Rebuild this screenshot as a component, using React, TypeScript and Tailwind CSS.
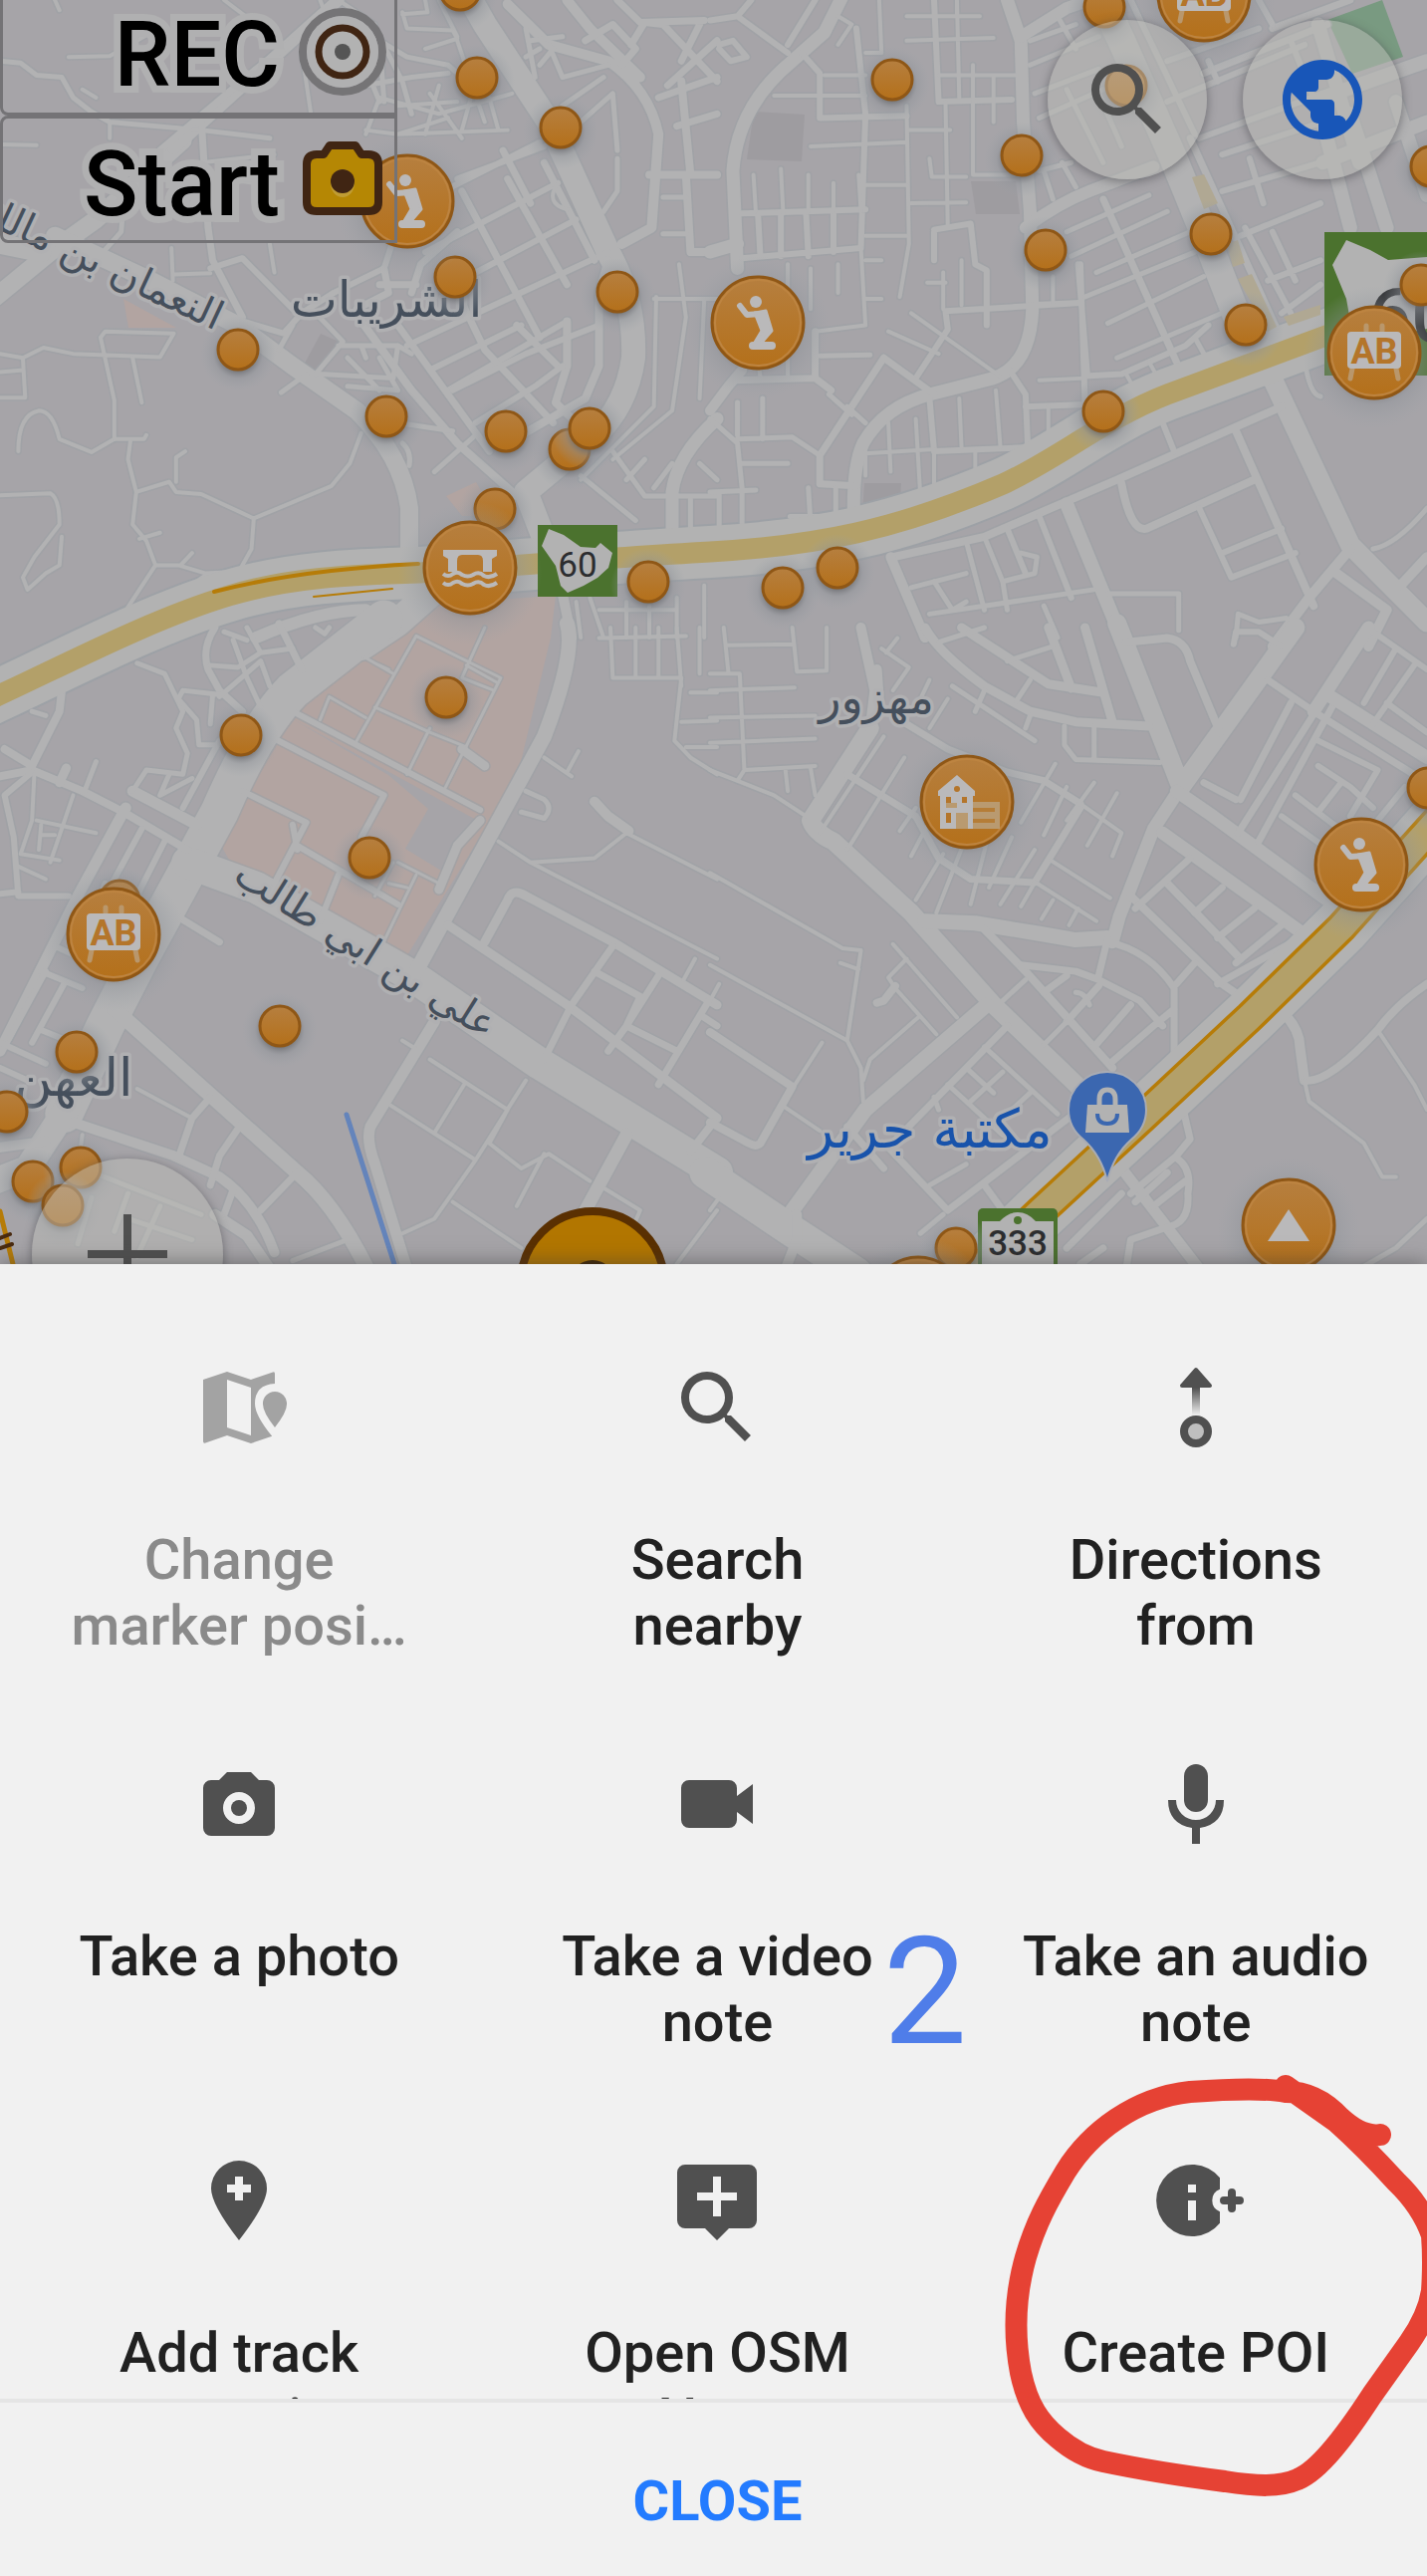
import { useId, type ReactNode } from "react";

type Road = [number, string];

// Street network, stored per map tile. Each tile is 1568 units square.
const tiles: { transform: string; roads: Road[] }[] = [
  {
    transform: "scale(0.4592 0.4082)",
    roads: [
      [18, "M-20 740 L110 620 L210 540 L400 345"],
      [12, "M380 365 L660 80 L740 0"],
      [20, "M0 600 L90 620"],
      [24, "M1030 0 L1060 60 L1200 300 L1330 620 Q1390 740 1385 880 Q1370 1000 1300 1070 L1150 1210 L1195 1340"],
      [18, "M120 580 L330 690 L520 800 L640 900 L780 1010 Q880 1120 895 1250 L895 1370"],
      [5, "M0 150 L45 155 L80 185 L135 190 L160 240 L200 275 L240 300 L440 320 L590 340"],
      [4, "M240 300 L240 340 M0 355 L80 357 M120 0 L130 25 M150 140 L240 138 L330 80 M490 0 L560 60 M180 220 L210 240"],
      [7, "M640 100 L560 170 L350 370 M440 290 L455 560 L465 640 L530 780"],
      [4, "M440 400 L600 380 M375 610 L378 690 M380 675 L460 672 M590 600 L600 670 M660 130 L680 280"],
      [6, "M460 660 L530 635 L640 760 M530 790 L620 820 L660 770 L730 720 L840 660 L860 590"],
      [5, "M270 500 L265 570 L210 640"],
      [4, "M0 870 L50 880 L95 855 L160 870 L350 878 L380 820 L230 815 L220 830 L250 985 L250 1080 L200 1112 L130 1080 Q115 1010 85 1010 Q40 1020 40 1110"],
      [4, "M50 880 L55 978 L0 978 M0 915 L50 910 M290 880 L310 990 M250 1080 L315 1080 L320 1070"],
      [4, "M285 1085 L280 1130 L298 1210 L290 1290 L320 1330 L340 1390 L270 1510"],
      [4, "M298 1210 L370 1185 L385 1210 L440 1215 L555 1275 L725 1195 L765 1140 L790 1065 M385 1185 L385 1125 L405 1110"],
      [4, "M555 1275 L550 1350 L525 1400 M340 1390 L390 1390 L450 1410 L530 1405 M420 1360 L395 1390 M305 1325 L350 1310 M430 1430 L455 1410"],
      [4, "M0 1218 L110 1213 Q130 1225 130 1290 L75 1370 L50 1420 L60 1450 L100 1410 L130 1390 L135 1320"],
      [8, "M790 790 L900 960 L1000 1090 L1130 1220"],
      [5, "M610 860 L640 800 M690 920 L750 840 L690 770 M740 850 L870 850 L860 930 L700 920 M760 880 L830 960 M870 850 L900 870 M615 965 L670 920 M790 850 L800 880 M830 880 L870 960 M760 950 L870 960"],
      [7, "M840 660 L850 720 L780 760 M900 720 L920 650 L1000 570 M830 700 L910 700"],
      [6, "M930 620 L1220 450 M970 470 L1180 350 M990 700 L1260 540 M890 850 L1330 620 M940 910 L1140 800 M980 960 L1240 790 M1000 440 L1190 360"],
      [7, "M1010 470 L1180 830 M1110 440 L1240 700 M1190 400 L1300 640 M1100 370 L1160 500"],
      [7, "M870 800 L1070 1110 M1000 720 L1060 860 L1210 1040 M1130 800 L1220 900"],
      [8, "M1330 640 L1310 720 L1310 900 L1280 980 L1140 1070 M1240 790 L1240 900 L1215 990 L1260 1040"],
      [6, "M990 960 L1150 870 L1310 800 M1040 1040 L1170 950 L1230 900"],
      [5, "M950 1160 L1040 1070 M870 1040 L990 1060 M880 1090 Q900 1110 895 1145"],
      [5, "M730 40 L800 80 L890 140 L980 160 L1000 180 M820 70 L880 200 L900 280 M790 140 L830 250 M800 210 L900 190 L980 180 M830 100 L840 250"],
      [4, "M880 30 L890 70 L990 75 L1000 95 L930 120 M960 0 L1000 90 M930 0 L935 30 L880 35 M700 0 L720 60 M740 0 L820 60"],
      [4, "M800 330 L830 240 L960 280 L1120 230 M870 330 L980 290 M1000 100 L1060 300 M800 320 L870 330 L1110 320 M870 260 L1000 250 M940 230 L1010 340 M1030 240 L1010 320 M1070 240 L1090 320 M960 210 L930 330"],
      [4, "M1220 450 Q1190 500 1240 515"],
      [10, "M1110 10 L1200 110 L1330 150 Q1420 220 1440 330 L1425 560 L1360 600 M1240 0 L1290 70 L1400 190"],
      [7, "M1280 100 L1340 60 L1390 120 L1360 160 M1380 110 L1410 55 L1450 60 L1568 200 M1460 210 L1568 100 M1480 310 L1568 280 M1440 240 L1568 190 M1530 60 L1490 150 M1350 0 L1400 55 L1540 50"],
      [8, "M1420 430 L1568 430 M1500 430 L1510 620 L1568 620 M1490 200 L1510 430"],
      [5, "M1450 485 L1500 485 M1450 575 L1500 575 M1200 110 L1230 190 L1330 160 M1150 70 L1170 190 M1230 260 L1320 190 M1240 330 L1340 230 L1350 370 M1350 390 L1350 470 L1320 520 M1180 120 L1150 140 M1160 100 L1230 90 M1210 120 L1180 160"],
      [4, "M1435 730 L1430 1000 L1270 1180 M1485 650 L1500 780 L1470 1010 L1340 1130 M1540 740 L1530 980 M1430 735 L1568 735"],
      [13, "M1568 1030 Q1480 1120 1470 1210 L1470 1330"],
      [5, "M1340 1110 L1410 1220 L1568 1220 M1270 1170 L1390 1280 M1410 1130 L1370 1180 M1530 1140 L1568 1180 M1470 1140 L1430 1200 M1510 1220 L1510 1310"],
      [10, "M1230 1460 L1250 1568"],
      [4, "M1260 1480 L1270 1568 M1290 1470 L1320 1568 M1370 1480 L1370 1568 M1420 1490 V1568 M1480 1470 V1568 M1310 1500 H1480 M1540 1440 V1568"],
      [28, "M960 1440 L870 1530 L790 1590"],
      [12, "M800 1500 Q700 1500 560 1568"],
    ],
  },
  {
    transform: "translate(713 0) scale(0.4592 0.4082)",
    roads: [
      [13, "M650 0 L680 100 L685 300 L700 520 L705 760 Q700 900 620 930 L480 970 Q380 1000 335 1090 Q310 1150 315 1290"],
      [12, "M680 90 L780 20 L830 0 M690 560 Q760 500 830 470 L970 410"],
      [13, "M290 -10 L250 80 L180 150 Q60 260 50 420 L60 660 M60 600 L0 620"],
      [28, "M850 -20 L900 100 L1010 380 L1090 600 L1160 800"],
      [20, "M1225 920 L1400 1340 L1568 1530"],
      [8, "M400 1370 L600 1320 L890 1180 L1250 1000 M780 1240 L880 1500 L910 1590 M900 1190 Q920 1310 955 1300 L1190 1180 M1150 1060 L1300 1440 L1320 1490"],
      [14, "M780 1240 L900 1568"],
      [6, "M1070 1250 L1140 1420 L1280 1360 M1120 1360 L1250 1300 M990 1040 L1015 1110 M720 1270 L790 1470 M650 1300 L690 1410"],
      [10, "M395 1370 L470 1568"],
      [5, "M440 1445 L560 1410 M560 1330 L600 1500 M480 1510 L840 1450 M490 1430 L530 1500 L560 1480 M870 1460 H1025 V1550 M680 1360 L715 1370 L710 1410 L640 1430 M600 1320 L640 1430 L650 1500 M730 1490 L760 1568"],
      [10, "M1400 1350 L1310 1470 L1230 1590 M1370 1410 L1480 1500 L1440 1590 M1510 1440 L1568 1370"],
      [5, "M1568 1250 Q1500 1340 1450 1350 M1300 880 Q1310 970 1335 975 M1150 1568 L1155 1510 L1200 1530 L1260 1520"],
      [6, "M70 525 L340 515 M105 530 L110 630 M155 525 V630 M210 525 L215 630 M270 520 V620 M70 635 L330 610 M320 70 L340 280 L330 610"],
      [6, "M200 130 L240 180 L240 290 L430 285 M490 0 L500 250 L660 245"],
      [4, "M250 185 H340 M140 235 H340 M280 110 L310 60 L280 40 M370 0 L375 130 L340 130 M430 260 L435 600 L415 730 M220 360 L430 350 M430 40 H590 M430 100 L620 93 M500 185 H670 M540 0 V40 M575 160 V430 L680 430 M620 190 V300 M480 390 L485 435 L560 435 M515 250 L520 560 M435 320 L525 320 M440 500 L560 498 M540 0 L545 240 M330 610 L340 800 L230 815 M340 640 H375 M340 735 H375"],
      [6, "M490 565 L570 550 L580 650 L605 665 L605 800 M490 570 V640 M515 765 L810 745 L700 750 M515 765 L520 810 L450 930"],
      [4, "M340 580 H430 M95 430 L100 520 M155 415 L160 525 M215 430 V520 M270 450 V520 M325 430 L330 520 M330 455 H430 M475 695 H515 M510 670 V760 M550 640 V750 M390 815 L500 870 M440 770 L640 930 M750 680 V745 M170 650 V930 M220 660 V760 M280 650 V720 M100 830 L110 930"],
      [7, "M380 880 L490 970 M380 880 L240 1120 L240 1190 L320 1195 M50 935 L230 930 L265 960 M230 930 V815"],
      [10, "M70 910 L40 950 L0 1010"],
      [5, "M300 1000 L340 1040 M0 1030 L60 1090 L70 1200 M240 875 L350 873 M60 1080 L180 1075 L240 1120 M0 1210 L100 1205 M20 1210 V1300 M70 1200 V1300 M60 990 V1070 M215 1200 L220 1290 M275 1200 V1290 M175 1270 H255 M115 980 V1080 M70 1140 H170 M260 970 L310 1020"],
      [6, "M655 910 L690 970 L695 1100 L490 1110 M480 980 L490 1110 M805 650 L825 920 M820 925 L900 920 L1040 850 L1090 800 M810 650 L820 990 M690 1000 L810 995"],
      [4, "M720 935 L820 930 M545 980 L550 1100 M625 960 L635 1100 M740 1000 V1060 M340 1115 L490 1105 M390 1040 L395 1160 M450 1030 L460 1220 M580 1110 V1160 M490 1110 V1190 M340 1110 V1170 M910 920 L930 960 M960 890 L980 930"],
      [6, "M0 50 L60 40 L170 130 M20 110 L50 100 L80 140 L45 150 L20 120 M170 110 L230 0 M60 40 L90 0"],
      [7, "M860 490 L1020 890 M1050 340 L1240 810 M1080 180 L1350 60 M1230 70 L1400 0"],
      [5, "M780 570 L960 480 M790 630 L1000 520 M845 670 L1050 570 M870 795 L1080 680 M890 880 L1120 770 M820 730 L1060 620 M700 160 L850 90 M710 230 L850 170 M720 290 L860 220 M700 100 L800 60 M760 40 L800 120 M780 220 L860 400 M850 230 L900 360 M730 420 L750 490 M770 400 L800 460 M720 420 L790 400 M1060 830 L1080 870"],
      [6, "M1000 250 L1300 110 M1070 340 L1340 230 M1120 380 L1340 300 M1120 470 L1335 400 M1160 580 L1335 500 M1170 560 L1270 770 M1220 690 L1335 640 M1250 770 L1335 700 M1090 150 L1110 200 M1230 60 L1200 0 M1180 390 L1210 500 M1230 570 L1280 690 M1000 150 L1200 70 M920 0 L1060 330 M1270 100 L1330 270"],
      [14, "M1340 300 L1400 560 M1400 280 L1480 560 M1500 250 L1568 480 M1340 400 L1568 300 M1340 240 L1568 150 M1330 60 L1420 400"],
    ],
  },
  {
    transform: "translate(0 630) scale(0.4592 0.4209)",
    roads: [
      [38, "M840 -20 L640 150 Q560 240 480 440 L400 600 L310 780 L230 950 L140 1160"],
      [26, "M150 1140 L60 1290 L-10 1320"],
      [32, "M410 560 L560 620 L900 830 L1180 1040 L1568 1300"],
      [15, "M1240 -10 Q1260 60 1190 260 L1080 480 L905 830"],
      [11, "M950 940 L810 1190 Q800 1220 820 1280 L890 1530"],
      [15, "M250 910 L650 1300 Q740 1380 820 1568"],
      [3, "M780 60 L860 110 M700 220 L720 165 L800 215 M780 270 L910 20 L1095 120 L970 390 M1060 0 L1010 120 L1080 150 M820 190 L940 250 L1020 285 M940 240 L890 350 M870 560 L960 610 M910 590 L830 770 M860 560 L820 640 M850 610 L890 620 M820 85 L850 100 M1020 90 L1085 130"],
      [6, "M640 200 L1050 435 M600 265 L840 400 L790 500 M530 390 L670 465 L600 610 M650 520 L870 660 M740 590 L700 700 M640 470 L650 530"],
      [9, "M1010 290 L1060 330 M1050 460 L1000 520 L960 625"],
      [8, "M10 290 L70 330 L130 200 L135 150 M0 355 L70 340 L180 390 L270 440 L410 530"],
      [6, "M70 345 L10 400 L30 500 L40 640 L150 640 M40 630 L0 635"],
      [4, "M75 350 L70 460 L45 540 M80 460 L210 490 M45 540 L130 555 M160 400 L110 560 M90 470 L85 530 M90 495 H120 M40 570 L100 600"],
      [11, "M275 430 L170 640 L0 1010 M290 390 L430 470"],
      [6, "M310 480 L240 620 M360 510 L290 660 M400 430 L480 270 M230 610 L220 640"],
      [5, "M300 85 L360 110 L400 200 L385 240 L410 300 L400 350 L320 340 L290 390 M370 350 L350 400 L420 360"],
      [7, "M470 0 Q440 50 455 100 L480 150 L530 200 M610 -10 L660 100"],
      [5, "M480 160 L400 150 L390 170 L430 220 L435 280 L470 280 M460 90 L520 95 L570 60 L640 50 M510 30 L540 120 L570 190 M480 165 L570 80 L590 140 M490 10 L540 30 M465 160 L460 230 M540 0 L570 60"],
      [5, "M100 210 L70 200 M210 320 L185 390 M690 0 L710 15 L720 0"],
      [9, "M145 335 L130 370"],
      [6, "M90 820 L180 860 M120 760 L200 800 M0 990 L100 1040 M20 980 L100 820 M0 1050 L60 1080 M70 990 L140 850 M90 960 L180 1000"],
      [10, "M160 1180 L380 1260 L480 1310 Q560 1370 600 1490 M0 1240 L100 1225"],
      [4, "M300 1100 L420 1170 M1265 295 L1240 345 M1190 310 L1250 355 M180 1210 L175 1250"],
      [7, "M460 1120 L420 1170 L390 1265 M530 1180 L480 1260 L460 1330 M650 1300 L570 1390 M390 690 L480 750 M510 1340 L490 1400"],
      [5, "M640 1510 L760 1460 M180 1290 L440 1400 M280 1350 L250 1440 M350 1380 L300 1500 M200 1360 L170 1470 M280 1410 L420 1460"],
      [11, "M470 1400 L540 1450 L590 1530"],
      [9, "M980 710 L1240 900 L1568 1170 M1060 750 L1110 650 Q1120 620 1150 640 L1340 750 L1568 900"],
      [7, "M1340 760 L1250 900 L1190 1030 M1300 820 L1400 880 L1370 950 L1480 1010 M1440 830 L1370 950 L1330 1010 M1550 890 L1440 1090 M1540 930 L1568 950"],
      [4, "M1370 490 L1568 600 M1090 510 L1160 560 L1300 550 L1370 490 M1160 560 L1568 790 M1520 790 L1495 840"],
      [10, "M1300 415 L1330 450 L1375 485"],
      [5, "M1150 390 L1190 410 Q1210 430 1190 455 L1140 440"],
      [4, "M1310 25 L1500 20 M1335 0 L1340 120 L1490 120 L1475 270 L1510 310 L1568 350 M1440 0 V120 M1390 0 V120 M1480 0 L1490 140 M1510 155 H1568 M1490 225 L1568 222 M1500 285 H1568 M1530 0 V110"],
      [4, "M940 1030 L1110 1150 L1070 1230 M1015 1090 L950 1205 M855 1140 L1040 1270 L950 1410 L880 1445 M1150 1080 L1040 1270 M1070 1230 L1140 1290 L1200 1255 L1290 1320 M990 1370 L1140 1480 M1190 1255 L1130 1380 M1310 1330 L1400 1390 L1380 1440 M880 985 L910 1005 M1568 1390 L1480 1518"],
      [13, "M1370 1210 L1250 1450"],
      [8, "M1560 1180 L1510 1250"],
    ],
  },
  {
    transform: "translate(713 630) scale(0.4592 0.4209)",
    roads: [
      [18, "M350 240 L220 460 Q230 490 270 510 L440 680 L620 900 L830 1120"],
      [11, "M900 1290 L1070 1530"],
      [15, "M470 700 L580 705 L720 730 L800 745 L870 740"],
      [13, "M880 750 L895 690 L970 480 L1030 380"],
      [19, "M1030 380 L890 -10 M1030 380 L1280 0"],
      [15, "M605 900 L340 1150 L180 1390"],
      [32, "M-10 1300 L180 1440 L320 1540"],
      [13, "M1020 390 L1100 450 L1350 650 M990 490 L1310 740"],
      [4, "M0 340 L70 370 L140 400 L210 450 M0 585 L290 765 L330 770 L300 985 L330 1050 L335 1130 M0 805 L300 985 M285 800 L325 815 M455 930 L350 1030 L335 1080 M400 755 L540 930 M430 790 L390 835 L405 860 L495 970 M245 990 L180 1100 M165 1145 L240 1200 M20 850 L0 890"],
      [8, "M0 965 L180 1095 L110 1230 Q100 1240 85 1230 L0 1180 M405 855 L380 890 L365 895"],
      [4, "M75 340 L65 110 L0 110 M60 365 L75 340 L230 330 M165 340 L170 390 M220 335 L230 400 M0 215 L230 210 M0 275 L230 265 M0 150 L185 143 M30 0 L40 105 M35 42 L180 40 M180 0 L190 105 L255 103 V0"],
      [10, "M330 0 L360 150 L350 240 M365 100 L370 180"],
      [4, "M375 50 L435 95 L400 150 M410 25 L385 60 M520 170 L480 240 M480 125 L460 170"],
      [7, "M400 210 L520 290 L650 345 L730 365 L810 420 M300 350 L450 450 L500 550 L570 600 L710 608 L810 430"],
      [4, "M810 420 L900 490 L880 545 M380 260 L240 490 M425 310 L300 530 M450 430 L415 485 M500 420 L440 545 M510 540 L450 650 M560 500 L495 680 M610 490 L570 660 M660 500 L610 620 M710 530 L635 660 M755 325 L680 465 M780 380 L730 495 M840 370 L780 460 M890 395 L825 520 M745 555 L875 645 M710 608 L680 665 M715 610 L845 700 M750 650 L725 695 M805 670 L785 710"],
      [9, "M470 0 Q500 60 600 140 L700 200 L800 225 L960 235 M550 0 L740 135 L860 155 M740 0 L790 145 M820 0 L880 225"],
      [5, "M500 35 L600 0 M650 80 L750 45 M700 125 L670 175 M530 140 L710 270 M600 150 L580 200 M700 210 L690 240 M775 235 L775 280 L800 315 L985 322 M840 235 V315"],
      [8, "M910 35 L1000 25 Q1040 30 1050 80 L1115 250"],
      [7, "M1220 125 L1320 200 L1480 310 L1568 370 M1155 490 L1330 190 L1440 0 M1080 370 L1150 410 M1160 410 L1270 180 M1370 170 L1200 510"],
      [13, "M1320 200 L1440 0 M1350 160 L1568 310"],
      [6, "M1450 10 L1568 100 M1500 50 L1430 180 M1540 90 L1450 230 M1480 180 L1568 250 M1280 400 L1400 500 M1330 330 L1400 380 L1450 430 M1250 450 L1340 520 M1380 370 L1330 440 M1460 340 L1400 450 M1520 380 L1460 460 M1330 270 L1460 340"],
      [6, "M1145 40 L1150 10 L1200 10 L1250 45"],
      [8, "M920 640 L1120 850 L1160 880 M1000 610 L1160 790 M600 720 L690 820 L880 1050"],
      [7, "M1050 550 L930 670 M1120 620 L1060 680 M1190 670 L1110 740 M1250 710 L1150 800 M1290 740 L1110 850 M1060 800 L1020 850 M680 805 L800 820 L850 840 L940 890 L990 950 M870 750 Q960 770 1015 860 L1015 1020 M870 740 L850 830 M780 830 L730 870 M850 855 L780 940 M920 900 L840 1000 M970 950 L880 1035 M1015 910 L970 950"],
      [5, "M800 870 Q820 870 830 900 M640 890 L690 840 M780 940 L730 995 M600 1000 L760 1160 M560 1050 L620 1110 M640 1060 L570 1130 M520 1090 L640 1210 M700 1110 L650 1160 M480 1330 L560 1280 M510 1400 L460 1445 M490 1120 L500 1150"],
      [7, "M650 950 L390 1240 L520 1390 L820 1140 M300 1190 L380 1290 M600 1330 L640 1390"],
      [10, "M190 1400 L190 1460 L165 1530"],
      [10, "M1255 920 Q1290 960 1290 1000 L1300 1080"],
      [8, "M1300 1080 Q1350 1090 1460 960 Q1500 900 1568 850"],
      [4, "M1300 1080 L1310 1130 L1430 1230 L1470 1310 L1500 1310 M1460 960 L1540 1090 L1568 1150 M0 1390 L20 1360"],
      [7, "M1035 1150 L1050 1220 L1020 1260 L920 1350 M1020 1265 Q1055 1290 1045 1350 Q1050 1420 1000 1430 L920 1460 L910 1530 M1000 1300 L930 1370 M900 1350 L780 1480 M860 1480 L810 1518 M1040 1320 L970 1380"],
      [5, "M1420 1530 L1500 1480 L1568 1410"],
    ],
  },
];

const smallPins: [number, number][] = [
  [462, -10], [479, 78], [563, 128], [457, 278], [620, 293], [239, 351], [388, 418], [508, 433],
  [572, 451], [592, 430], [497, 511], [651, 584], [1109, 7], [896, 80], [1026, 156], [1050, 251],
  [1216, 235], [1251, 326], [1108, 413], [841, 570], [786, 590], [1437, 167], [1427, 286], [1131, 86],
  [448, 700], [242, 738], [371, 861], [120, 904], [281, 1030], [77, 1056], [7, 1116], [33, 1186],
  [81, 1172], [63, 1210], [960, 1253], [1434, 791],
];

type PinKind = "prayer" | "school" | "bridge" | "house" | "peak";
const bigPins: [number, number, PinKind][] = [
  [409, 202, "prayer"], [761, 324, "prayer"], [1367, 868, "prayer"],
  [1380, 354, "school"], [114, 938, "school"], [1209, -5, "school"],
  [472, 570, "bridge"], [971, 805, "house"], [1294, 1230, "peak"], [922, 1308, "peak"],
];

function PinGlyph({ kind }: { kind: PinKind }) {
  if (kind === "prayer")
    return (
      <g fill="#bab9ba" stroke="#bab9ba" strokeLinecap="round" strokeLinejoin="round">
        <circle cx="-2" cy="-21" r="6" stroke="none" />
        <path d="M-18 -17 L-11 -8 L4 -9" fill="none" strokeWidth="6" />
        <path d="M-3 -10 L8 -12 L14 8 L2 22 L-5 23 L4 8 Z" strokeWidth="3" />
        <path d="M-5 23 H14" fill="none" strokeWidth="8" />
      </g>
    );
  if (kind === "school")
    return (
      <g>
        <path d="M-8 -22 V-27 M8 -22 V-27 M-22 16 L-24 26 M22 16 L24 26" stroke="#b9976c" strokeWidth="5" strokeLinecap="round" />
        <rect x="-27" y="-21" width="54" height="37" rx="4" fill="#bab9ba" />
        <text y="11" textAnchor="middle" className="fill-[#b4752a] text-[36px] font-bold" fontFamily="Roboto, sans-serif">AB</text>
      </g>
    );
  if (kind === "bridge")
    return (
      <g fill="#bab9ba">
        <path d="M-27 -18 H27 V-12 L22 -9 V4 H13 V-7 Q13 -13 8 -13 H-8 Q-13 -13 -13 -7 V4 H-22 V-9 L-27 -12 Z" />
        <path d="M-27 6 q5 4 10 0 q5 -3 9 1 q6 3 11 0 q6 -4 11 1 q6 3 13 -2 M-27 15 q5 4 10 0 q5 -3 9 1 q6 3 11 0 q6 -4 11 1 q6 3 13 -2" fill="none" stroke="#bab9ba" strokeWidth="4" />
      </g>
    );
  if (kind === "house")
    return (
      <g>
        <rect x="5" y="0" width="28" height="27" fill="#b99a70" />
        <path d="M5 8 H28 M5 19 H28" stroke="#b57d37" strokeWidth="4" />
        <path d="M-29 -11 L-10 -27 L8 -11 V-6 H6 V27 H-27 V-6 H-29 Z" fill="#bab9ba" />
        <circle cx="-10" cy="-13" r="3" fill="#b4752a" />
        <path d="M-21 -5 h5 v6 h-5 Z M-5 -5 h5 v6 h-5 Z M-21 11 h5 v10 h-5 Z" fill="#b4752a" />
        <path d="M-11 11 H1 V27 H-11 Z M-21 1 h11 v5 h-11 Z" fill="#b99a70" />
      </g>
    );
  return <path d="M0 -16 L21 16 H-21 Z" fill="#bab9ba" />;
}

const halo = "[paint-order:stroke_fill] [stroke-linejoin:round] stroke-[#b0b0b2] stroke-[7px]";

function CityMap() {
  const id = useId();
  const url = (n: string) => `url(#${id}${n})`;
  const highway = "M-10 702 C60 670 150 622 230 598 C290 580 350 577 422 575 C560 564 640 558 713 554 C820 548 900 532 1007 486 C1060 462 1110 420 1172 396 L1345 332";
  const route333 = "M1445 822 L1347 931 L1255 1021 L1149 1120 L1044 1217 L980 1278";
  return (
    <svg
      className="absolute inset-0 h-full w-full"
      viewBox="0 0 1433 1269"
      preserveAspectRatio="xMidYMin slice"
      role="img"
      aria-label="City map"
      fontFamily='"DejaVu Sans", sans-serif'
    >
      <defs>
        <linearGradient id={id + "pin"} x1="0" y1="0" x2="0" y2="1">
          <stop offset="0" stopColor="#b67f3f" />
          <stop offset="1" stopColor="#b4701a" />
        </linearGradient>
        <radialGradient id={id + "glow"}>
          <stop offset="0.45" stopColor="#6d6e72" stopOpacity="0.85" />
          <stop offset="0.66" stopColor="#8e9298" stopOpacity="0.4" />
          <stop offset="1" stopColor="#9aa2a8" stopOpacity="0" />
        </radialGradient>
      </defs>
      <rect width="1433" height="1269" fill="#a6a4a8" />
      <g fill="#b2a4a1">
        <path d="M124 300 L177 329 L129 329 Z M448 498 L478 484 L498 518 L464 518 Z" />
        <path d="M220 845 L244 802 L298 710 L358 651 L399 630 L436 606 L558 598 L553 640 L523 765 L491 826 L404 967 L235 872 Z" />
      </g>
      <path d="M294 722 L390 778 L430 812 L407 852 L443 874 L480 824 L400 780 Z" fill="#a6a4a8" />
      <path d="M1333 20 L1388 0 L1409 57 L1358 74 Z" fill="#799a81" />
      <g fill="#9e9ca0">
        <path d="M757 112 L808 115 L805 162 L750 160 Z M975 182 L1020 182 L1024 215 L980 215 Z M868 485 L905 485 L904 505 L866 515 Z M302 372 L322 335 L345 345 L322 376 Z" />
      </g>
      <g fill="none" strokeLinejoin="round" strokeLinecap="round">
        {tiles.map((t) => (
          <g key={t.transform} transform={t.transform} stroke="#9da1a6">
            {t.roads.map(([w, d]) => (
              <path key={d} d={d} strokeWidth={w + 3} strokeOpacity={0.75} vectorEffect="non-scaling-stroke" />
            ))}
          </g>
        ))}
        <path d={highway} stroke="#9da1a6" strokeWidth="56" />
        <path d={route333} stroke="#9da1a6" strokeWidth="60" />
        {tiles.map((t) => (
          <g key={t.transform} transform={t.transform} stroke="#b2b2b3">
            {t.roads.map(([w, d]) => (
              <path key={d} d={d} strokeWidth={w} vectorEffect="non-scaling-stroke" />
            ))}
          </g>
        ))}
        <path d={highway} stroke="#b2b2b2" strokeWidth="52" />
        <path d={highway} stroke="#b3a069" strokeWidth="21" />
        <path d="M215 594 Q300 572 420 566" stroke="#b67c08" strokeWidth="4" />
        <path d="M315 599 L394 591" stroke="#b67c08" strokeWidth="2" />
        <path d={route333} stroke="#b2b2b2" strokeWidth="57" />
        <path d={route333} stroke="#b67c08" strokeWidth="33" />
        <path d={route333} stroke="#b3a069" strokeWidth="26" />
        <path d="M348 1119 L396 1269" stroke="#6484bb" strokeWidth="5" />
        <path d="M0 1216 L13 1269" stroke="#b67c08" strokeWidth="5" />
        <path d="M0 1243 L10 1239 M0 1253 L12 1249" stroke="#4a2b10" strokeWidth="4" />
      </g>
      <path d="M1197 178 L1209 175 L1223 204 L1209 210 Z M1232 245 L1243 241 L1250 264 L1238 268 Z M1243 280 L1257 275 L1282 328 L1273 333 Z M1289 318 L1326 306 L1326 316 L1294 327 Z" fill="#b0a893" />

      <g className={halo} fill="#454f5c">
        <text x="388" y="318" textAnchor="middle" fontSize="50">الشريبات</text>
        <text x="74" y="1100" textAnchor="middle" fontSize="52">العهن</text>
        <text x="880" y="716" textAnchor="middle" fontSize="46">مهزور</text>
        <text transform="translate(216 332) rotate(25)" textAnchor="end" fontSize="40">النعمان بن مالك</text>
        <text transform="translate(488 1044) rotate(32)" textAnchor="end" fontSize="40">علي بن ابي طالب</text>
        <text x="934" y="1152" textAnchor="middle" fontSize="54" fill="#1853ab">مكتبة جرير</text>
      </g>

      <path d="M1112 1186 Q1106 1160 1088 1144 Q1073 1132 1073 1114 A39 38 0 0 1 1151 1114 Q1151 1132 1136 1144 Q1118 1160 1112 1186 Z" fill="#3b67b0" stroke="#a9acb4" strokeWidth="2" />
      <path d="M1092 1109 H1132 L1134 1137 H1090 Z" fill="#b2b2b2" />
      <path d="M1104 1110 V1104 Q1104 1094 1112 1094 Q1120 1094 1120 1104 V1110" fill="none" stroke="#b2b2b2" strokeWidth="5" />
      <path d="M1102 1118 Q1102 1128 1112 1128 Q1122 1128 1122 1118" fill="none" stroke="#3b67b0" strokeWidth="4" />

      <rect x="540" y="527" width="80" height="72" fill="#4b722e" />
      <path d="M551 531 L566 537 L583 549 L598 550 L603 545 L615 555 L611 570 L600 580 L586 588 L570 595 L563 588 L558 568 L544 548 Z" fill="#b2b2b2" />
      <text x="580" y="579" textAnchor="middle" fontFamily="Roboto, sans-serif" fontSize="35" fill="#2c2d2f">60</text>
      <rect x="1330" y="233" width="110" height="144" fill="#4b722e" />
      <path d="M1352 241 L1376 251 L1394 261 L1433 258 V330 L1360 345 L1352 300 L1338 266 Z" fill="#b2b2b2" />
      <text x="1374" y="343" fontFamily="Roboto, sans-serif" fontSize="76" fontWeight="500" fill="#2c2d2f">60</text>
      <rect x="982" y="1213" width="80" height="66" rx="5" fill="#4b722e" />
      <path d="M986 1269 V1226 H1004 Q1012 1217 1022 1217 Q1032 1217 1040 1226 H1058 V1269 Z" fill="#b2b2b2" />
      <circle cx="1022" cy="1225" r="4" fill="#4b722e" />
      <text x="1022" y="1260" textAnchor="middle" fontFamily="Roboto, sans-serif" fontSize="35" fontWeight="500" fill="#2c2d2f">333</text>

      {smallPins.map(([x, y]) => (
        <g key={`${x}-${y}`}>
          <circle cx={x} cy={y + 4} r="38" fill={url("glow")} />
          <circle cx={x} cy={y} r="20" fill={url("pin")} stroke="#8f5716" strokeWidth="3" />
        </g>
      ))}
      {bigPins.map(([x, y, kind]) => (
        <g key={`${x}-${y}`} transform={`translate(${x} ${y})`}>
          <circle cy="5" r="72" fill={url("glow")} />
          <circle r="46" fill={url("pin")} stroke="#8f5716" strokeWidth="3" />
          <circle r="43" fill="none" stroke="#bd8441" strokeWidth="2" />
          <PinGlyph kind={kind} />
        </g>
      ))}
      <circle cx="595" cy="1288" r="72" fill="#b27600" stroke="#5a3002" strokeWidth="8" />
      <circle cx="595" cy="1288" r="23" fill="#3f2504" />
    </svg>
  );
}

const widgetText =
  "pt-2 text-[90px] leading-none font-medium text-black [paint-order:stroke_fill] [-webkit-text-stroke:14px_#b0b0b1]";

function MapWidgets() {
  return (
    <div className="absolute top-0 left-0 w-[399px]">
      <button type="button" className="flex h-[116px] w-full items-center justify-end gap-[18px] rounded-bl-lg border-[3px] border-t-0 border-[#747376] pr-[7px] pb-[10px]">
        <span className={widgetText}>REC</span>
        <svg width="90" height="90" viewBox="0 0 90 90" aria-hidden="true">
          <circle cx="45" cy="45" r="40" fill="none" stroke="#757476" strokeWidth="8" />
          <circle cx="45" cy="45" r="36" fill="#b0b0b1" />
          <circle cx="45" cy="45" r="24" fill="#b2b2b2" stroke="#402513" strokeWidth="7" />
          <circle cx="45" cy="45" r="8" fill="#555" />
        </svg>
      </button>
      <button type="button" className="flex h-[128px] w-full items-center justify-end gap-[18px] rounded-l-lg border-[3px] border-[#747376] pt-1 pr-[7px]">
        <span className={widgetText}>Start</span>
        <svg width="90" height="90" viewBox="0 0 90 90" aria-hidden="true">
          <path d="M19 18 H26 L32 9 H58 L64 18 H71 Q81 18 81 28 V66 Q81 75 71 75 H19 Q9 75 9 66 V28 Q9 18 19 18 Z" fill="#b58704" stroke="#402513" strokeWidth="8" strokeLinejoin="round" />
          <ellipse cx="45" cy="47" rx="12" ry="14" fill="#c09c33" />
          <circle cx="45" cy="45" r="12" fill="#402513" />
        </svg>
      </button>
    </div>
  );
}

const roundButton =
  "absolute flex items-center justify-center rounded-full bg-[#b9bab6]/50 shadow-[0_2px_8px_1px_rgba(70,70,75,0.5)]";

const searchPath =
  "M15.5 14h-.79l-.28-.27A6.471 6.471 0 0 0 16 9.5 6.5 6.5 0 1 0 9.5 16c1.61 0 3.09-.59 4.23-1.57l.27.28v.79l5 4.99L20.49 19l-4.99-5zm-6 0C7.01 14 5 11.99 5 9.5S7.01 5 9.5 5 14 7.01 14 9.5 11.99 14 9.5 14z";

function ArrowFromIcon() {
  const id = useId();
  return (
    <>
      <defs>
        <linearGradient id={id} x1="0" y1="7" x2="0" y2="14" gradientUnits="userSpaceOnUse">
          <stop offset="0" stopColor="#505050" />
          <stop offset="1" stopColor="#505050" stopOpacity="0" />
        </linearGradient>
      </defs>
      <path d="M12 2.5 L15.5 6.5 H8.5 Z" stroke="currentColor" strokeLinejoin="round" strokeWidth="1" />
      <path d="M11 7 H13 V14 H11 Z" fill={`url(#${id})`} />
      <circle cx="12" cy="18" r="3" fill="#bfbfbf" stroke="currentColor" strokeWidth="2" />
    </>
  );
}

const actions: { label: string; icon: ReactNode; disabled?: boolean }[] = [
  {
    label: "Change\nmarker posi…",
    disabled: true,
    icon: (
      <>
        <path fillRule="evenodd" d="M3 5 L9 3 L15 5 L20.5 3.1 Q21 2.9 21 3.5 V6 Q16 6.3 16 11 Q16 14 20.3 19.2 L15 21 L9 19 L3.6 20.9 Q3 21.1 3 20.5 Z M9 5 V17 L15 19 V7 Z" />
        <path d="M21 8 A3 3 0 0 1 24 11.2 Q24 13.2 21 17 Q18 13.2 18 11.2 A3 3 0 0 1 21 8 Z" />
      </>
    ),
  },
  { label: "Search\nnearby", icon: <path d={searchPath} /> },
  { label: "Directions\nfrom", icon: <ArrowFromIcon /> },
  {
    label: "Take a photo",
    icon: (
      <>
        <path fillRule="evenodd" d="M7 6 L9 4 H15 L17 6 H19 A2 2 0 0 1 21 8 V18 A2 2 0 0 1 19 20 H5 A2 2 0 0 1 3 18 V8 A2 2 0 0 1 5 6 Z M12 9 A4 4 0 1 0 12 17 A4 4 0 1 0 12 9 Z" />
        <circle cx="12" cy="13" r="2" />
      </>
    ),
  },
  {
    label: "Take a video\nnote",
    icon: <path d="M5 6 H15 A2 2 0 0 1 17 8 V10 L21 7 V17 L17 14 V16 A2 2 0 0 1 15 18 H5 A2 2 0 0 1 3 16 V8 A2 2 0 0 1 5 6 Z" />,
  },
  {
    label: "Take an audio\nnote",
    icon: (
      <>
        <rect x="9" y="2" width="6" height="12" rx="3" />
        <path d="M5 11 H7 A5 5 0 0 0 17 11 H19 Q19 17 13 18 V22 H11 V18 Q5 17 5 11 Z" />
      </>
    ),
  },
  {
    label: "Add track\nwaypoint",
    icon: <path fillRule="evenodd" d="M12 2 A7 7 0 0 1 19 9 Q19 13 12 22 Q5 13 5 9 A7 7 0 0 1 12 2 Z M11 6 V8 H9 V10 H11 V12 H13 V10 H15 V8 H13 V6 Z" />,
  },
  {
    label: "Open OSM\nNote",
    icon: <path fillRule="evenodd" d="M4 3 H20 A2 2 0 0 1 22 5 V17 A2 2 0 0 1 20 19 H15 L12 22 L9 19 H4 A2 2 0 0 1 2 17 V5 A2 2 0 0 1 4 3 Z M11 6 V10 H7 V12 H11 V16 H13 V12 H17 V10 H13 V6 Z" />,
  },
  {
    label: "Create POI",
    icon: (
      <>
        <path fillRule="evenodd" d="M18 6.3 V9.2 A3 3 0 0 0 18 14.8 V17.7 A9 9 0 1 1 18 6.3 Z M10 8 V10 H12 V8 Z M10 12 V17 H12 V12 Z" />
        <path d="M21 10 V14 M19 12 H23" stroke="currentColor" strokeWidth="2" strokeLinecap="round" />
      </>
    ),
  },
];

export default function App() {
  return (
    <div className="relative flex min-h-screen flex-col overflow-hidden bg-[#f1f1f1] font-['Roboto',sans-serif]">
      <main className="relative min-h-[600px] flex-1 overflow-hidden">
        <CityMap />
        <MapWidgets />
        <button type="button" aria-label="Search" className={`${roundButton} top-5 right-[221px] size-40`}>
          <svg viewBox="0 0 24 24" className="size-24 fill-[#505050]" aria-hidden="true">
            <path d={searchPath} />
          </svg>
        </button>
        <button type="button" aria-label="Map source" className={`${roundButton} top-5 right-[25px] size-40`}>
          <svg viewBox="0 0 24 24" className="size-24 fill-[#1856b8]" aria-hidden="true">
            <path d="M12 2C6.48 2 2 6.48 2 12s4.48 10 10 10 10-4.48 10-10S17.52 2 12 2zm-1 17.93c-3.95-.49-7-3.85-7-7.93 0-.62.08-1.21.21-1.79L9 15v1c0 1.1.9 2 2 2v1.93zm6.9-2.54c-.26-.81-1-1.39-1.9-1.39h-1v-3c0-.55-.45-1-1-1H8v-2h2c.55 0 1-.45 1-1V7h2c1.1 0 2-.9 2-2v-.41c2.93 1.19 5 4.06 5 7.41 0 2.08-.8 3.97-2.1 5.39z" />
          </svg>
        </button>
        <button type="button" aria-label="Zoom in" className={`${roundButton} -bottom-[86px] left-8 size-48`}>
          <svg viewBox="0 0 24 24" className="size-24 fill-none stroke-[#505050] stroke-2" aria-hidden="true">
            <path d="M12 2 V22 M2 12 H22" />
          </svg>
        </button>
      </main>

      <section aria-label="Map actions" className="relative bg-[#f1f1f1] shadow-[0_-2px_18px_rgba(60,60,60,0.5)]">
        <div className="h-[1139px] overflow-hidden">
          <div className="-mr-2 grid grid-cols-3 pt-24">
            {actions.map((a) => (
              <button
                key={a.label}
                type="button"
                disabled={a.disabled}
                className="flex h-[398px] flex-col items-center gap-[72px] text-[#212121] disabled:text-[#8a8a8a]"
              >
                <svg
                  viewBox="0 0 24 24"
                  aria-hidden="true"
                  className={a.disabled ? "size-24 fill-current text-[#a3a3a3]" : "size-24 fill-current text-[#505050]"}
                >
                  {a.icon}
                </svg>
                <span className="text-center text-[56px] leading-[66px] font-medium whitespace-pre-line">{a.label}</span>
              </button>
            ))}
          </div>
        </div>
        <div className="border-t-4 border-[#e5e5e5]">
          <button type="button" className="flex h-[174px] w-full items-center justify-center pt-6 pl-2 text-[56px] leading-[66px] font-bold text-[#237bff]">
            CLOSE
          </button>
        </div>

        <span className="absolute top-[641px] right-[462px] text-[150px] leading-[180px] text-[#4f7de9]">2</span>
        <svg
          viewBox="1000 2070 433 440"
          className="pointer-events-none absolute top-[801px] right-0 h-[440px] w-[433px] overflow-visible"
          fill="none"
          stroke="#e64234"
          strokeWidth="22"
          strokeLinecap="round"
          strokeLinejoin="round"
          aria-hidden="true"
        >
          <path d="M1386 2143 Q1368 2146 1346 2126 Q1322 2100 1291 2100 Q1265 2095 1195 2100 C1140 2106 1095 2140 1070 2180 C1052 2210 1040 2232 1030 2266 C1019 2305 1018 2345 1025 2382 C1032 2415 1044 2432 1062 2447 Q1084 2466 1108 2471 Q1160 2482 1230 2491 C1262 2496 1285 2497 1303 2489 C1325 2480 1352 2444 1378 2404 L1415 2352 Q1434 2325 1438 2300 Q1440 2270 1438 2244 Q1428 2215 1402 2190 Q1370 2155 1342 2130 L1291 2094" />
        </svg>
      </section>
    </div>
  );
}
